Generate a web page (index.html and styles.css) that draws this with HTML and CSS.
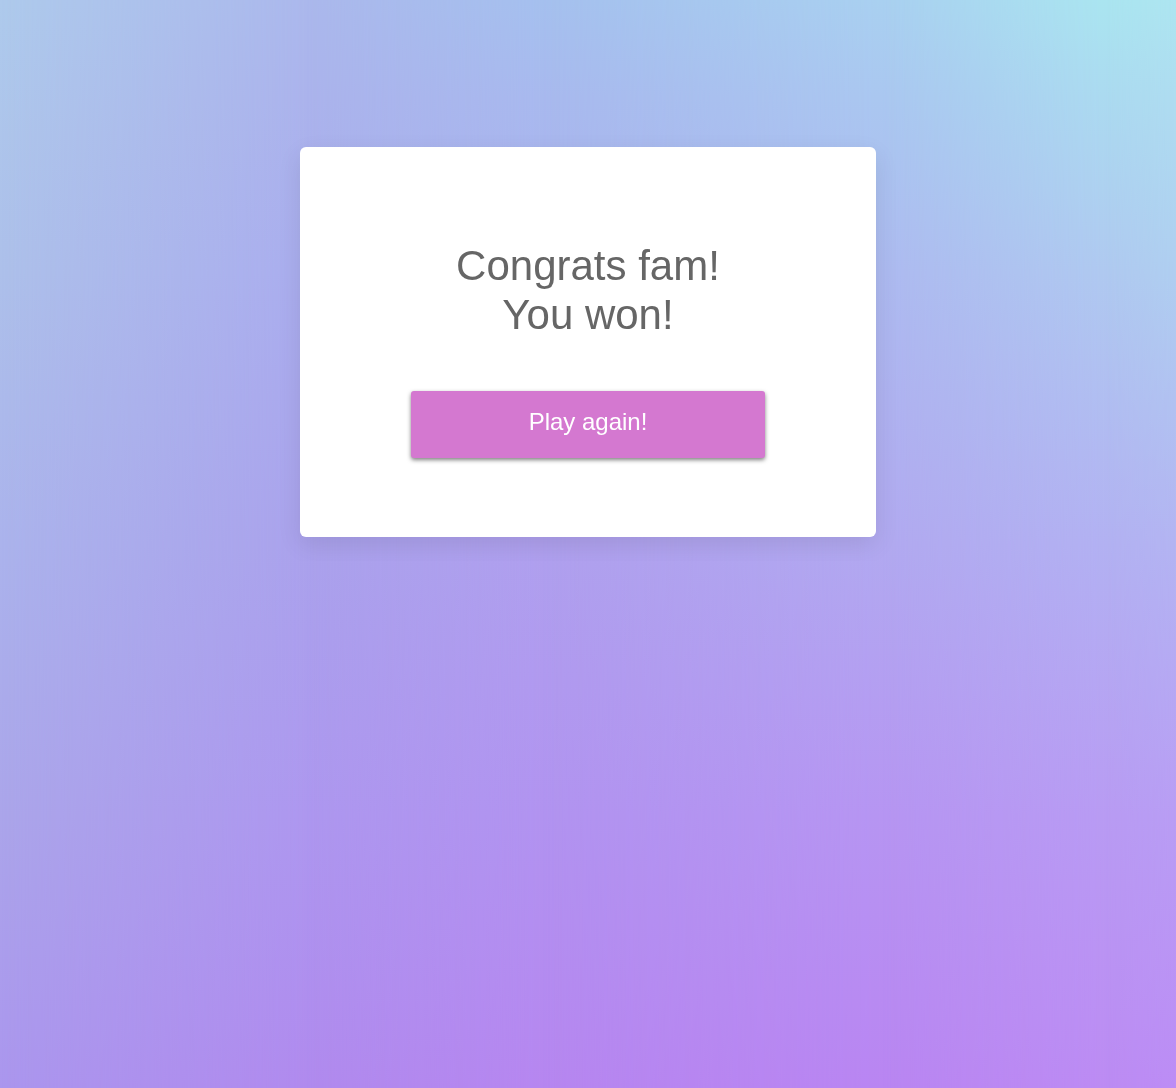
FILE: index.html
```html
<!DOCTYPE html>
<html lang="en">
<head>
  <meta charset="utf-8">
  <meta name="viewport" content="width=device-width, initial-scale=1">
  <title>You won!</title>
  <link rel="stylesheet" href="styles.css">
</head>
<body>
  <div class="backdrop" aria-hidden="true">
    <div class="wash wash-1"></div>
    <div class="wash wash-2"></div>
    <div class="wash wash-3"></div>
    <div class="wash wash-4"></div>
    <div class="wash wash-5"></div>
  </div>
  <main class="page">
    <section class="card">
      <h1 class="title">Congrats fam!<br>You won!</h1>
      <button class="play" type="button">Play again!</button>
    </section>
  </main>
</body>
</html>
```
FILE: styles.css
```css
* {
  box-sizing: border-box;
}

body {
  margin: 0;
  font-family: "Liberation Sans", Helvetica, Arial, sans-serif;
}

/* Vertical colour washes, each fading in from left to right over the last */
.backdrop {
  position: fixed;
  inset: 0;
  z-index: -1;
  background: linear-gradient(#aecaec, #adc0ea 25%, #abb3ec 50%, #aba5ea 75%, #ab96ee);
}

.wash {
  position: absolute;
  inset: 0;
}

.wash-1 {
  background: linear-gradient(#abb8ec, #abb3ec 9%, #aaadee 25%, #aaa2ec 50%, #ad97ef 75%, #b08aee);
  mask-image: linear-gradient(to right, transparent, #000 26%);
}

.wash-2 {
  background: linear-gradient(#a5c0ee, #a8b9ee 9%, #abb0ee 25%, #afa0ee 50%, #b193f0 75%, #b686f0);
  mask-image: linear-gradient(to right, transparent 26%, #000 46%);
}

.wash-3 {
  background: linear-gradient(#a9d0f0, #aac7f0 9%, #adbaf0 25%, #b1a9f0 50%, #b695f2 75%, #b985f2);
  mask-image: linear-gradient(to right, transparent 46%, #000 75%);
}

.wash-4 {
  background: linear-gradient(#aae5f0, #abdaf0 9%, #afc9f0 25%, #b2b1f2 50%, #b89bf3 75%, #bc8bf3);
  mask-image: linear-gradient(to right, transparent 75%, #000 94%);
}

.wash-5 {
  background: linear-gradient(#ade5f0, #aedcf0 9%, #afcef0 25%, #b3b4f2 50%, #b89df4 75%, #bc8cf5);
  mask-image: linear-gradient(to right, transparent 94%, #000);
}

.page {
  display: flex;
  justify-content: center;
  padding: 147px 24px 24px;
}

.card {
  width: 100%;
  max-width: 576px;
  padding: 94px 24px 79px;
  display: flex;
  flex-direction: column;
  align-items: center;
  gap: 52px;
  border-radius: 6px;
  background: #fff;
  box-shadow: 0 8px 24px rgba(0, 0, 0, 0.09);
}

.title {
  margin: 0;
  font-size: 42px;
  line-height: 49px;
  font-weight: 400;
  color: #666;
  text-align: center;
}

.play {
  width: 100%;
  max-width: 354px;
  padding: 17px 16px 22px;
  border: 0;
  border-radius: 3px;
  background: #d478d0;
  box-shadow: 0 2px 4px rgba(0, 0, 0, 0.5);
  font-family: inherit;
  font-size: 24px;
  line-height: 28px;
  color: #fff;
  cursor: pointer;
}
```
